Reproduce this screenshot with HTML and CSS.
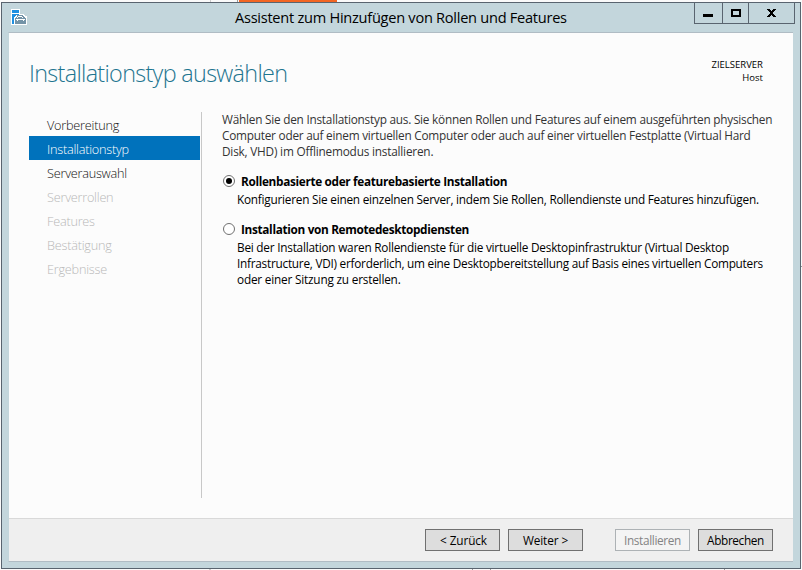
FILE: index.html
```html
<!DOCTYPE html>
<html lang="de">
<head>
<meta charset="utf-8">
<title>Assistent zum Hinzufügen von Rollen und Features</title>
<link rel="stylesheet" href="styles.css">
</head>
<body>
<div class="desktop">
  <i class="orange"></i><i class="tick t1"></i><i class="tick t2"></i>
  <i class="tick b1"></i><i class="tick b2"></i><i class="tick b3"></i><i class="tick b4"></i><i class="tick r1"></i>
  <main class="window">
    <header class="titlebar">
      <svg class="app-icon" width="16" height="16" viewBox="0 0 16 16" shape-rendering="crispEdges">
        <path fill="#fff" d="M0 0h9v5h4v1h1v1h2v9H0z"/>
        <path fill="#1e8fe0" d="M1 1h7v3H1zM1 5h7v1H5v1H4v1H3v7H1z"/>
        <path fill="#7393a7" d="M6 6h6v1h1v1h1v1h1v6H4V9h1V8h1z"/>
        <path fill="#fff" d="M7 7h4v1H7zM6 8h1v1H6zM11 8h1v1h-1zM5 10h9v1H5zM6 11h1v1H6zM12 11h1v1h-1z"/>
      </svg>
      <h1>Assistent zum Hinzufügen von Rollen und Features</h1>
      <div class="controls">
        <span class="ctl min"><svg width="10" height="3"><path d="M0 0h10v3H0z"/></svg></span>
        <span class="ctl max"><svg width="10" height="8"><path fill-rule="evenodd" d="M0 0h10v8H0zM2 2v4h6V2z"/></svg></span>
        <span class="ctl close"><svg width="9" height="8" shape-rendering="crispEdges"><path d="M0 0h3v1h1v1h1V1h1V0h3v1H8v1H7v1H6v2h1v1h1v1h1v1H6V7H5V6H4v1H3v1H0V7h1V6h1V5h1V3H2V2H1V1H0z"/></svg></span>
      </div>
    </header>
    <div class="client">
      <section class="heading">
        <h2>Installationstyp auswählen</h2>
        <div class="target"><span>ZIELSERVER</span><span>Host</span></div>
      </section>
      <div class="main">
        <nav>
          <a>Vorbereitung</a>
          <a class="active">Installationstyp</a>
          <a>Serverauswahl</a>
          <a class="off">Serverrollen</a>
          <a class="off">Features</a>
          <a class="off">Bestätigung</a>
          <a class="off">Ergebnisse</a>
        </nav>
        <div class="content">
          <p class="intro"><span>Wählen Sie den Installationstyp aus. Sie können Rollen und Features auf einem ausgeführten physischen</span><span>Computer oder auf einem virtuellen Computer oder auch auf einer virtuellen Festplatte (Virtual Hard</span><span class="short">Disk, VHD) im Offlinemodus installieren.</span></p>
          <div class="option">
            <label><i class="radio checked"></i><b>Rollenbasierte oder featurebasierte Installation</b></label>
            <p><span>Konfigurieren Sie einen einzelnen Server, indem Sie Rollen, Rollendienste und Features hinzufügen.</span></p>
          </div>
          <div class="option">
            <label><i class="radio"></i><b>Installation von Remotedesktopdiensten</b></label>
            <p><span>Bei der Installation waren Rollendienste für die virtuelle Desktopinfrastruktur (Virtual Desktop</span><span class="tight">Infrastructure, VDI) erforderlich, um eine Desktopbereitstellung auf Basis eines virtuellen Computers</span><span class="short">oder einer Sitzung zu erstellen.</span></p>
          </div>
        </div>
      </div>
      <footer>
        <button class="back">&lt; Zurück</button><button class="next">Weiter &gt;</button><button class="install" disabled>Installieren</button><button>Abbrechen</button>
      </footer>
    </div>
  </main>
</div>
</body>
</html>
```
FILE: styles.css
```css
* { box-sizing: border-box; }
body { margin: 0; font: 11.8px/16px "Open Sans", "Noto Sans", sans-serif; color: #000; }
h1, h2, p { margin: 0; font-weight: 400; }
.desktop { position: relative; width: 802px; height: 570px; padding: 2px 1px 1px 1px; background: #fafafa; overflow: hidden; }
.orange { position: absolute; left: 239px; top: 0; width: 98px; height: 2px; background: #f26522; }
.tick { position: absolute; width: 1px; height: 2px; background: #999; }
.t1 { left: 210px; top: 0; background: #ccc; }
.t2 { left: 237px; top: 0; }
.b1 { left: 209px; top: 569px; width: 2px; background: #ccc; }
.b2 { left: 472px; top: 569px; }
.b3 { left: 490px; top: 569px; }
.b4 { left: 724px; top: 569px; }
.r1 { left: 801px; top: 266px; height: 1px; }
.window { width: 800px; height: 567px; border: 1px solid #59646f; background: #c3d6dc; padding: 0 7px 6px 6px; display: flex; flex-direction: column; }
.titlebar { height: 29px; flex: none; display: flex; align-items: flex-start; }
.app-icon { margin: 6px 0 0 3px; }
h1 { margin-left: 208px; font-size: 14.6px; line-height: 29px; white-space: nowrap; letter-spacing: -0.27px; }
.controls { margin-left: auto; margin-right: -2px; display: flex; border: 1px solid #59646f; border-top: 0; height: 21px; }
.ctl { display: flex; justify-content: center; align-items: flex-start; height: 20px; }
.min { width: 27px; padding: 11px 1px 0 0; }
.max { width: 26px; padding-top: 6px; border-left: 1px solid #59646f; }
.close { width: 46px; padding-top: 6px; border-left: 1px solid #59646f; }
.client { flex: 1; border: 1px solid #b0bcc4; border-right: 0; border-left-color: #c3d6dc; background: #fcfcfc; display: flex; flex-direction: column; }
.heading { height: 79px; display: flex; justify-content: space-between; padding: 23px 30px 0 20px; }
h2 { font-size: 23.4px; line-height: 34px; font-weight: 300; color: #1e7590; letter-spacing: -0.68px; white-space: nowrap; }
.target { display: flex; flex-direction: column; align-items: flex-end; font-size: 9.5px; line-height: 13px; padding-top: 2px; }
.main { flex: 1; display: flex; padding-left: 20px; }
nav { flex: none; width: 173px; height: 386px; border-right: 1px solid #c8c8c8; padding-right: 1px; }
nav a { display: block; height: 24px; padding-left: 18px; font-size: 12.7px; line-height: 27px; font-weight: 300; color: #111; white-space: nowrap; letter-spacing: -0.23px; }
nav .active { background: #0072bc; color: #fff; }
nav .off { color: #b8b8b8; }
.content { padding-left: 20px; margin-top: -1px; }
p span { display: block; width: max-content; white-space: nowrap; letter-spacing: -0.23px; }
p .short { letter-spacing: -0.2px; }
p .tight { letter-spacing: -0.25px; }
.intro { color: #333; margin-bottom: 14px; }
.option { margin-bottom: 14px; }
.option label { display: flex; align-items: center; height: 16px; gap: 6px; padding-left: 1px; margin-bottom: 2px; white-space: nowrap; letter-spacing: -0.33px; }
.option p { padding-left: 15px; }
.radio { width: 12px; height: 12px; border: 1px solid #707070; border-radius: 50%; background: #fff; display: flex; align-items: center; justify-content: center; }
.checked::after { content: ""; width: 6px; height: 6px; border-radius: 50%; background: #000; }
footer { height: 43px; flex: none; border-top: 1px solid #d9d9d9; background: #efefef; display: flex; justify-content: flex-end; align-items: flex-start; gap: 8px; padding: 10px 20px 0 0; }
button { width: 75px; height: 22px; border: 1px solid #707070; background: #ddd; font: inherit; color: #000; padding: 0; white-space: nowrap; letter-spacing: -0.35px; }
.back { padding-left: 2px; letter-spacing: -0.1px; }
.next { letter-spacing: -0.1px; }
.install { margin-left: 24px; border-color: #adb2b5; background: #f4f4f4; color: #838383; }
```
